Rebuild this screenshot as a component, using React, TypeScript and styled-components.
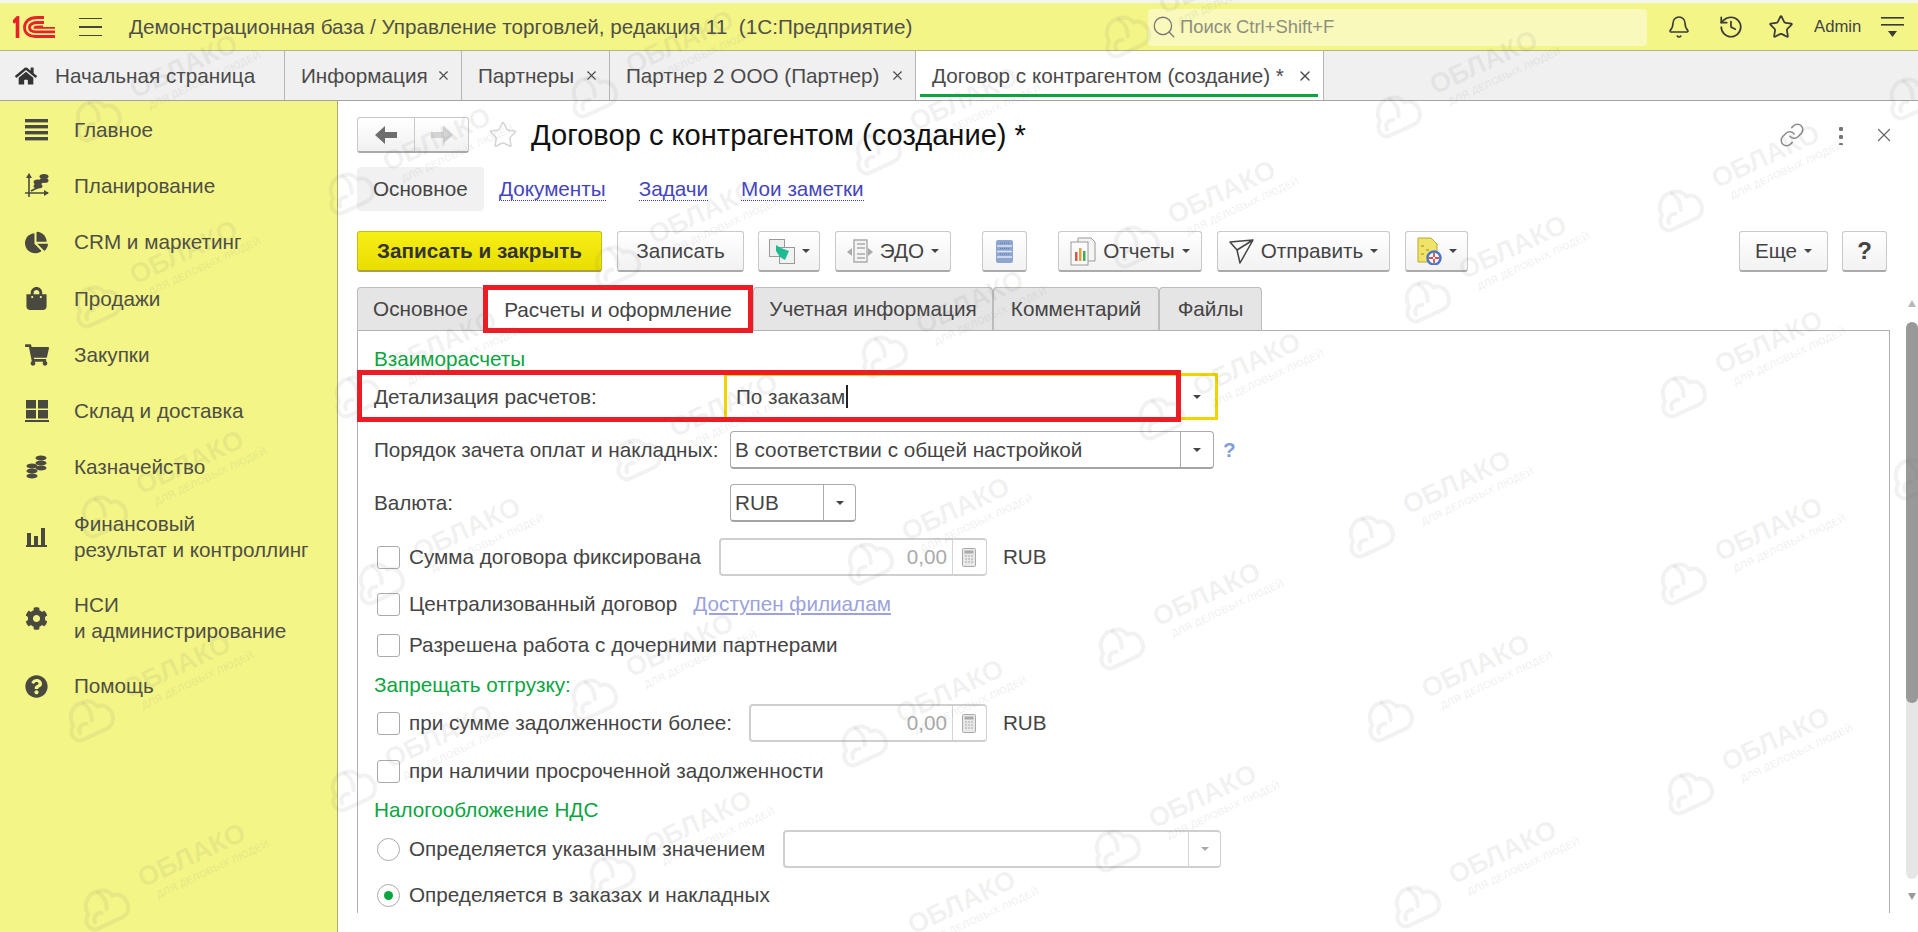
import React from "react";
import styled, { createGlobalStyle } from "styled-components";
import { Bell, History, Star, Search, Link as LinkIcon, X } from "lucide-react";
import { FaHome, FaCog, FaShoppingCart, FaQuestionCircle, FaShoppingBag, FaChartPie } from "react-icons/fa";

const GlobalStyle = createGlobalStyle`
  html, body { margin: 0; padding: 0; background: #fff; overflow: hidden; }
  * { box-sizing: border-box; }
  body { font-family: "Liberation Sans", Arial, sans-serif; color: #444; }
`;

const Page = styled.div`
  position: relative;
  width: 1918px;
  height: 932px;
  overflow: hidden;
  background: #fff;
  display: flex;
  flex-direction: column;
`;

const Header = styled.header`
  height: 51px;
  padding-top: 4px;
  background: linear-gradient(#f4f4f0 0 3px, #f3f587 3px);
  border-bottom: 1px solid #b5b580;
  display: flex;
  align-items: center;
`;

const Logo = styled.svg`
  width: 42px;
  height: 22px;
  margin-left: 13px;
`;

const Burger = styled.div`
  width: 23px;
  height: 18px;
  margin-left: 24px;
  border-top: 1.5px solid #444;
  border-bottom: 1.5px solid #444;
  position: relative;
  &::after {
    content: "";
    position: absolute;
    left: 0;
    right: 0;
    top: 7px;
    height: 1.5px;
    background: #444;
  }
`;

const HeaderTitle = styled.div`
  margin-left: 27px;
  width: 1019px;
  font-size: 20.7px;
  color: #505048;
  white-space: pre;
`;

const SearchBox = styled.div`
  width: 499px;
  height: 37px;
  background: #f8f9bb;
  border-radius: 4px;
  display: flex;
  align-items: center;
  padding-left: 3px;
  font-size: 18.4px;
  color: #8f8f80;
  gap: 3px;
`;

const HeaderIcon = styled.div<{ $ml: number }>`
  margin-left: ${(p) => p.$ml}px;
  display: flex;
  color: #3a3a3a;
`;

const AdminName = styled.div`
  margin-left: 20px;
  font-size: 16.7px;
  color: #444;
`;

const TabBar = styled.nav`
  height: 50px;
  background: #f0f0f0;
  border-bottom: 1px solid #a3a3a3;
  display: flex;
`;

const PageTab = styled.div<{ $w: number; $active?: boolean }>`
  position: relative;
  width: ${(p) => p.$w}px;
  height: 49px;
  border-right: 1px solid #b5b5b5;
  background: ${(p) => (p.$active ? "#fff" : "transparent")};
  display: flex;
  align-items: center;
  justify-content: space-between;
  padding: 0 10px 0 16px;
  font-size: 20.7px;
  color: #4a4a4a;
  white-space: nowrap;
  &::after {
    content: "";
    display: ${(p) => (p.$active ? "block" : "none")};
    position: absolute;
    left: 4px;
    right: 5px;
    top: 43px;
    height: 3px;
    background: #0aa53f;
  }
`;

const HomeTab = styled(PageTab)`
  justify-content: flex-start;
  padding-left: 15px;
  gap: 18px;
`;

const Main = styled.div`
  flex: 1;
  display: flex;
  min-height: 0;
`;

const Sidebar = styled.aside`
  width: 338px;
  flex: none;
  padding-top: 1px;
  background: #f3f587;
  border-right: 1px solid #a9a975;
`;

const SideItem = styled.div<{ $h?: number }>`
  height: ${(p) => p.$h ?? 56}px;
  display: flex;
  align-items: center;
  padding-left: 24px;
  font-size: 20.7px;
  line-height: 26px;
  color: #4f4f45;
`;

const SideIcon = styled.div`
  width: 25px;
  height: 25px;
  margin-right: 25px;
  display: flex;
  align-items: center;
  justify-content: center;
  color: #49493f;
`;

const Content = styled.main`
  flex: 1;
  min-width: 0;
  padding: 16px 0 0 19px;
  display: flex;
  flex-direction: column;
`;

const TitleRow = styled.div`
  height: 36px;
  display: flex;
  align-items: center;
`;

const NavBtnGroup = styled.div`
  width: 112px;
  height: 36px;
  display: flex;
  border: 1px solid #c9c9c9;
  border-bottom: 2px solid #aaa;
  border-radius: 3px;
  background: linear-gradient(#fff, #f1f1f1);
`;

const NavBtn = styled.div<{ $first?: boolean }>`
  flex: ${(p) => (p.$first ? "0 0 57px" : "1")};
  border-right: ${(p) => (p.$first ? "1px solid #c9c9c9" : "none")};
  display: flex;
  align-items: center;
  justify-content: center;
`;

const FavStar = styled.div`
  margin-left: 19px;
  display: flex;
  color: #d6d6d6;
`;

const FormTitle = styled.h1`
  margin: 0 0 0 13px;
  font-size: 29.1px;
  font-weight: 400;
  color: #111;
  white-space: nowrap;
`;

const TitleActions = styled.div`
  margin-left: auto;
  margin-right: 23px;
  display: flex;
  align-items: center;
  color: #8a8a8a;
`;

const Dots = styled.div`
  margin: 0 30px 0 34px;
  width: 4px;
  height: 20px;
  background: radial-gradient(circle, #777 2px, transparent 2.4px) 0 0 / 4px 8px repeat-y;
`;

const FormNav = styled.div`
  margin-top: 14px;
  height: 44px;
  display: flex;
  align-items: center;
  font-size: 20.7px;
`;

const NavCurrent = styled.div`
  width: 127px;
  height: 44px;
  border-radius: 4px;
  background: #f1f1f1;
  display: flex;
  align-items: center;
  padding-left: 16px;
  color: #444;
`;

const NavLink = styled.a<{ $ml: number }>`
  margin-left: ${(p) => p.$ml}px;
  color: #4545bd;
  border-bottom: 1px dotted #3a3ab0;
  line-height: 22px;
`;

const Toolbar = styled.div`
  margin-top: 20px;
  height: 41px;
  padding-right: 31px;
  display: flex;
`;

const Btn = styled.div<{ $w: number; $ml?: number; $primary?: boolean; $auto?: boolean }>`
  width: ${(p) => p.$w}px;
  height: 41px;
  margin-left: ${(p) => (p.$auto ? "auto" : `${p.$ml ?? 0}px`)};
  border: 1px solid ${(p) => (p.$primary ? "#c8bd10" : "#c9c9c9")};
  border-bottom: 2px solid ${(p) => (p.$primary ? "#a8a14a" : "#ababab")};
  border-radius: 3px;
  background: ${(p) => (p.$primary ? "linear-gradient(#f6ef16, #e9de00)" : "linear-gradient(#fff, #f2f2f2)")};
  display: flex;
  align-items: center;
  justify-content: center;
  gap: 7px;
  font-size: 20.7px;
  font-weight: ${(p) => (p.$primary ? 700 : 400)};
  color: ${(p) => (p.$primary ? "#333" : "#444")};
  white-space: nowrap;
`;

const Caret = styled.span<{ $light?: boolean }>`
  width: 0;
  height: 0;
  border-left: 4px solid transparent;
  border-right: 4px solid transparent;
  border-top: 4px solid ${(p) => (p.$light ? "#aaa" : "#444")};
`;

const Help = styled.span`
  font-size: 24px;
  font-weight: 700;
  color: #444;
`;

const Lower = styled.div`
  margin-top: 15px;
  display: flex;
`;

const FormArea = styled.div`
  width: 1533px;
  flex: none;
`;

const Tabs = styled.div`
  height: 44px;
  display: flex;
  position: relative;
  z-index: 1;
  margin-bottom: -1px;
`;

const FormTab = styled.div<{ $w: number; $active?: boolean }>`
  position: relative;
  width: ${(p) => p.$w}px;
  height: 44px;
  background: ${(p) => (p.$active ? "#fff" : "#e5e5e5")};
  border: 1px solid #bcbcbc;
  border-left-width: ${(p) => (p.$active ? 0 : 1)}px;
  border-bottom: ${(p) => (p.$active ? "none" : "1px solid #b0b0b0")};
  border-radius: 4px 4px 0 0;
  display: flex;
  align-items: center;
  justify-content: center;
  font-size: 20.7px;
  color: #444;
  white-space: nowrap;
`;

const RedFrame = styled.div`
  position: absolute;
  border: 5px solid #ed1c24;
  pointer-events: none;
  z-index: 3;
`;

const TabFrame = styled(RedFrame)`
  left: -1px;
  right: -1px;
  top: -3px;
  height: 48px;
`;

const RowFrame = styled(RedFrame)`
  left: -17px;
  top: -3px;
  width: 824px;
  height: 52px;
`;

const Panel = styled.section`
  height: 583px;
  padding: 15px 0 0 16px;
  border: 1px solid #b0b0b0;
  border-bottom: none;
`;

const Heading = styled.div<{ $mt?: number }>`
  height: 26px;
  margin-top: ${(p) => p.$mt ?? 0}px;
  display: flex;
  align-items: center;
  font-size: 20.7px;
  color: #0aa53f;
`;

const Row = styled.div<{ $h?: number; $mt?: number }>`
  position: relative;
  height: ${(p) => p.$h ?? 38}px;
  margin-top: ${(p) => p.$mt ?? 0}px;
  display: flex;
  align-items: center;
  font-size: 20.7px;
  color: #444;
  white-space: nowrap;
`;

const Label = styled.div<{ $w: number }>`
  width: ${(p) => p.$w}px;
  flex: none;
`;

const Check = styled.div`
  width: 23px;
  height: 23px;
  margin: 0 9px 0 3px;
  flex: none;
  background: #fff;
  border: 1px solid #aaa;
  border-radius: 3px;
`;

const Radio = styled(Check)<{ $on?: boolean }>`
  border-radius: 50%;
  display: flex;
  align-items: center;
  justify-content: center;
  &::after {
    content: "";
    display: ${(p) => (p.$on ? "block" : "none")};
    width: 9px;
    height: 9px;
    border-radius: 50%;
    background: #0aa53f;
  }
`;

const Field = styled.div<{ $w: number; $ml?: number; $off?: boolean }>`
  width: ${(p) => p.$w}px;
  height: 38px;
  margin-left: ${(p) => p.$ml ?? 0}px;
  flex: none;
  display: flex;
  background: #fff;
  border: 1px solid ${(p) => (p.$off ? "#cfcfcf" : "#ababab")};
  border-bottom: 2px solid ${(p) => (p.$off ? "#cfcfcf" : "#a3a3a3")};
  border-top-width: ${(p) => (p.$off ? 2 : 1)}px;
  border-left-width: ${(p) => (p.$off ? 2 : 1)}px;
  border-radius: 4px;
`;

const FieldValue = styled.div<{ $right?: boolean; $muted?: boolean }>`
  flex: 1;
  display: flex;
  align-items: center;
  justify-content: ${(p) => (p.$right ? "flex-end" : "flex-start")};
  padding: 0 ${(p) => (p.$right ? 5 : 4)}px;
  color: ${(p) => (p.$muted ? "#aaa" : "#444")};
`;

const FieldSide = styled.div<{ $w: number; $off?: boolean }>`
  width: ${(p) => p.$w}px;
  border-left: 1px solid ${(p) => (p.$off ? "#d5d5d5" : "#ababab")};
  display: flex;
  align-items: center;
  justify-content: center;
`;

const FocusField = styled.div`
  width: 494px;
  height: 47px;
  flex: none;
  margin-left: -1px;
  display: flex;
  align-items: center;
  border: 3px solid #f0d500;
  padding-left: 9px;
`;

const TextCursor = styled.span`
  width: 2px;
  height: 23px;
  background: #222;
  margin-left: 1px;
`;

const FocusArrow = styled.div`
  margin-left: auto;
  width: 37px;
  display: flex;
  justify-content: center;
`;

const HintMark = styled.span`
  margin-left: 9px;
  font-weight: 700;
  color: #7f9fd6;
`;

const Currency = styled.span`
  margin-left: 16px;
`;

const FilialLink = styled.span`
  margin-left: 16px;
  color: #9ba2dc;
  text-decoration: underline;
`;

const Scroll = styled.div`
  width: 12px;
  margin-left: 16px;
  padding-top: 13px;
  display: flex;
  flex-direction: column;
  align-items: center;
`;

const ScrollUp = styled.span`
  width: 0;
  height: 0;
  border-left: 4px solid transparent;
  border-right: 4px solid transparent;
  border-bottom: 7px solid #b9b9b9;
`;

const ScrollDown = styled.span`
  margin-top: 14px;
  width: 0;
  height: 0;
  border-left: 4px solid transparent;
  border-right: 4px solid transparent;
  border-top: 7px solid #999;
`;

const ScrollTrack = styled.div`
  margin-top: 15px;
  width: 12px;
  height: 557px;
  border-radius: 6px;
  background: #e6e6e6;
`;

const ScrollThumb = styled.div`
  height: 381px;
  border-radius: 6px;
  background: #999;
`;

const WatermarkLayer = styled.div`
  position: absolute;
  inset: 0;
  overflow: hidden;
  pointer-events: none;
  z-index: 5;
`;

const Watermark = styled.div`
  position: absolute;
  display: flex;
  gap: 18px;
  transform: rotate(-25deg);
  transform-origin: 126px 13px;
  color: rgba(110, 110, 110, 0.09);
`;

const WmText = styled.div`
  display: flex;
  flex-direction: column;
  align-items: flex-start;
`;

const WmName = styled.div`
  font-size: 27px;
  line-height: 27px;
  font-weight: 700;
  white-space: nowrap;
`;

const WmSlogan = styled.div`
  margin: 1px 0 0 9px;
  font-size: 10.5px;
  line-height: 12px;
  font-weight: 700;
  white-space: nowrap;
`;

const Cloud = () => (
  <svg width="52" height="44" viewBox="0 0 52 44" fill="none" stroke="currentColor" strokeWidth="4" strokeLinecap="round">
    <path d="M12 40 C3 40 1 28 9 23 C8 11 18 4 27 6 C35 7 38 12 39 16 C47 16 50 24 49 30 C48 37 43 40 38 40 Z" />
    <path d="M12 33 C12 27 17 25 22 27 M27 7 C31 13 31 20 28 26" />
  </svg>
);

// text centre of each stamp, measured on the screenshot
const stamps = [
  [182, 67], [435, 140], [182, 253], [441, 343], [188, 463], [465, 530], [175, 667], [190, 856], [437, 737],
  [678, 43], [701, 213], [722, 406], [678, 646], [696, 823], [962, 100], [968, 303], [954, 510], [948, 692],
  [960, 903], [1211, -17], [1220, 193], [1245, 365], [1205, 595], [1201, 797], [1482, 63], [1511, 248],
  [1455, 483], [1474, 667], [1501, 853], [1764, 157], [1767, 343], [1767, 530], [1774, 740], [1996, 45],
  [2000, 425],
];

const Logo1C = () => (
  <Logo viewBox="0 0 42 22" fill="none" stroke="#e8212a" strokeWidth="2.8">
    <path d="M0 6.5 L4.5 2 V22" strokeWidth="3.6" />
    <path d="M31 1.5 H24 C16 1.5 11.5 6 11.5 11.5 C11.5 17 16 20.5 22 20.5 H42" />
    <path d="M31 6.5 H25 C20 6.5 16.5 8 16.5 11.5 C16.5 14.5 19 15.8 23 15.8 H42" />
    <path d="M30 10.5 H25 C23 10.5 21.5 10.8 21.5 11.8 H42" strokeWidth="1.8" />
  </Logo>
);

const ArrowBtn = ({ left, color }: { left?: boolean; color: string }) => (
  <svg width="22" height="18" viewBox="0 0 22 18" fill={color} style={left ? undefined : { transform: "scaleX(-1)" }}>
    <path d="M0 9 L10 0 V6 H22 V12 H10 V18 Z" />
  </svg>
);

const MenuGlyph = () => (
  <svg width="23" height="21" viewBox="0 0 23 21" fill="#3a3a3a">
    <rect width="23" height="1.6" />
    <rect y="7" width="23" height="1.6" />
    <path d="M7 14 H16 L11.5 20 Z" />
  </svg>
);

const MainMenuIcon = () => (
  <svg width="23" height="22" viewBox="0 0 23 22" fill="currentColor">
    <rect y="0" width="23" height="3.4" />
    <rect y="6" width="23" height="3.4" />
    <rect y="12" width="23" height="3.4" />
    <rect y="18" width="23" height="3.4" />
  </svg>
);

const PlanIcon = () => (
  <svg width="25" height="26" viewBox="0 0 25 26" fill="none" stroke="currentColor">
    <path d="M5 1 V24 M1 20 H24" strokeWidth="1.6" />
    <path d="M2 5 L5 0 L8 5 Z M20 17 L25 20 L20 23 Z" fill="currentColor" stroke="none" />
    <path d="M7 18 L15 14" strokeWidth="1.6" />
    <ellipse cx="20" cy="3.5" rx="4.5" ry="2.5" fill="currentColor" stroke="none" />
    <ellipse cx="20" cy="7.5" rx="4.5" ry="2.5" fill="currentColor" stroke="none" />
    <ellipse cx="14" cy="9" rx="4.5" ry="2.5" fill="currentColor" stroke="none" />
    <ellipse cx="14" cy="13" rx="4.5" ry="2.5" fill="currentColor" stroke="none" />
  </svg>
);

const StockIcon = () => (
  <svg width="24" height="22" viewBox="0 0 24 22" fill="currentColor">
    <rect x="1" width="10" height="8.5" />
    <rect x="13" width="10" height="8.5" />
    <rect x="1" y="10" width="10" height="8.5" />
    <rect x="13" y="10" width="10" height="8.5" />
    <rect y="20" width="24" height="2" />
  </svg>
);

const CoinsIcon = () => (
  <svg width="21" height="25" viewBox="0 0 21 25" fill="currentColor">
    <ellipse cx="15" cy="3" rx="5.5" ry="2.6" />
    <ellipse cx="15" cy="8" rx="5.5" ry="2.6" />
    <ellipse cx="15" cy="13" rx="5.5" ry="2.6" />
    <ellipse cx="6" cy="11" rx="5.5" ry="2.6" />
    <ellipse cx="6" cy="16" rx="5.5" ry="2.6" />
    <ellipse cx="6" cy="21" rx="5.5" ry="2.6" />
  </svg>
);

const BarsIcon = () => (
  <svg width="21" height="20" viewBox="0 0 21 20" fill="currentColor">
    <rect x="1" y="6" width="4" height="12" />
    <rect x="8" y="9" width="4" height="9" />
    <rect x="15" y="1" width="4" height="17" />
    <rect y="18" width="21" height="2" />
  </svg>
);

const CalcIcon = () => (
  <svg width="14" height="19" viewBox="0 0 14 19" fill="none" stroke="#aaa">
    <rect x="0.5" y="0.5" width="13" height="18" rx="1" fill="#e8e8e8" />
    <rect x="2.5" y="2.5" width="9" height="3" fill="#aaa" stroke="none" />
    <path d="M3 8 H11 M3 11 H11 M3 14 H11" strokeDasharray="2 1" />
  </svg>
);

const MoveDocIcon = () => (
  <svg width="26" height="25" viewBox="0 0 26 25">
    <rect x="0.5" y="0.5" width="15" height="17" fill="#eee" stroke="#999" />
    <rect x="10.5" y="8.5" width="15" height="16" fill="#f2f2f2" stroke="#999" />
    <path d="M7 6 L12 9 L20 12 L16 21 L11 18 L7 12 Z" fill="#1dbb8f" />
  </svg>
);

const EdoIcon = () => (
  <svg width="26" height="24" viewBox="0 0 26 24" fill="none" stroke="#aaa" strokeWidth="1.4">
    <path d="M7 1 H20 V23 H7 Z" fill="#f4f4f4" />
    <path d="M10 5 H18 M10 9 H18 M10 15 H18 M10 19 H18" />
    <path d="M0 13 L5 9 V17 Z M26 13 L21 9 V17 Z" fill="#aaa" stroke="none" />
  </svg>
);

const StackIcon = () => (
  <svg width="17" height="23" viewBox="0 0 17 23">
    <rect width="17" height="23" rx="2" fill="#8ea6cf" />
    <path d="M1 6 H16 M1 11.5 H16 M1 17 H16" stroke="#dfe6f2" strokeWidth="1.4" />
    <path d="M4 3 H13 M4 8.5 H13 M4 14 H13" stroke="#5f7cae" strokeDasharray="1 1" />
  </svg>
);

const ReportsIcon = () => (
  <svg width="26" height="29" viewBox="0 0 26 29">
    <path d="M8 1 H21 L25 5 V24 H8 Z" fill="#f5f5f5" stroke="#999" />
    <rect x="1" y="5" width="17" height="23" fill="#fbfbfb" stroke="#999" />
    <rect x="5" y="15" width="2.5" height="9" fill="#d9534f" />
    <rect x="9" y="11" width="2.5" height="13" fill="#e2a23b" />
    <rect x="13" y="14" width="2.5" height="10" fill="#3fae5a" />
  </svg>
);

const SendIcon = () => (
  <svg width="25" height="25" viewBox="0 0 25 25" fill="none" stroke="#444" strokeWidth="1.5" strokeLinejoin="round">
    <path d="M1 3 L24 1 L11 24 L8 11 Z M8 11 L24 1" />
  </svg>
);

const SupportDocIcon = () => (
  <svg width="25" height="28" viewBox="0 0 25 28">
    <path d="M1 1 H14 L20 7 V25 H1 Z" fill="#f0e36a" stroke="#b8aa2f" />
    <path d="M4 9 H7 M9 13 H12 M4 17 H7" stroke="#b8aa2f" strokeWidth="1.5" />
    <circle cx="17" cy="21" r="6.5" fill="#fff" stroke="#4a76c8" strokeWidth="2.5" />
    <path d="M17 16 V20 M17 22 V26 M12 21 H16 M18 21 H22" stroke="#e04a4a" strokeWidth="1.8" />
  </svg>
);

const App = () => (
  <Page>
    <GlobalStyle />
    <Header>
      <Logo1C />
      <Burger />
      <HeaderTitle>{"Демонстрационная база / Управление торговлей, редакция 11  (1С:Предприятие)"}</HeaderTitle>
      <SearchBox>
        <Search size={26} strokeWidth={1.2} color="#777" />
        Поиск Ctrl+Shift+F
      </SearchBox>
      <HeaderIcon $ml={20}>
        <Bell size={24} strokeWidth={1.6} />
      </HeaderIcon>
      <HeaderIcon $ml={27}>
        <History size={26} strokeWidth={1.6} />
      </HeaderIcon>
      <HeaderIcon $ml={24}>
        <Star size={26} strokeWidth={1.6} />
      </HeaderIcon>
      <AdminName>Admin</AdminName>
      <HeaderIcon $ml={20}>
        <MenuGlyph />
      </HeaderIcon>
    </Header>

    <TabBar>
      <HomeTab $w={285}>
        <FaHome size={22} color="#333" />
        Начальная страница
      </HomeTab>
      <PageTab $w={177}>
        Информация
        <X size={15} strokeWidth={1.8} />
      </PageTab>
      <PageTab $w={148}>
        Партнеры
        <X size={15} strokeWidth={1.8} />
      </PageTab>
      <PageTab $w={306}>
        Партнер 2 ООО (Партнер)
        <X size={15} strokeWidth={1.8} />
      </PageTab>
      <PageTab $w={408} $active>
        Договор с контрагентом (создание) *
        <X size={16} strokeWidth={2} />
      </PageTab>
    </TabBar>

    <Main>
      <Sidebar>
        <SideItem>
          <SideIcon><MainMenuIcon /></SideIcon>Главное
        </SideItem>
        <SideItem>
          <SideIcon><PlanIcon /></SideIcon>Планирование
        </SideItem>
        <SideItem>
          <SideIcon><FaChartPie size={23} /></SideIcon>CRM и маркетинг
        </SideItem>
        <SideItem $h={57}>
          <SideIcon><FaShoppingBag size={23} /></SideIcon>Продажи
        </SideItem>
        <SideItem>
          <SideIcon><FaShoppingCart size={24} /></SideIcon>Закупки
        </SideItem>
        <SideItem>
          <SideIcon><StockIcon /></SideIcon>Склад и доставка
        </SideItem>
        <SideItem>
          <SideIcon><CoinsIcon /></SideIcon>Казначейство
        </SideItem>
        <SideItem $h={84}>
          <SideIcon><BarsIcon /></SideIcon>
          <div>Финансовый<br />результат и контроллинг</div>
        </SideItem>
        <SideItem $h={78}>
          <SideIcon><FaCog size={23} /></SideIcon>
          <div>НСИ<br />и администрирование</div>
        </SideItem>
        <SideItem $h={58}>
          <SideIcon><FaQuestionCircle size={23} /></SideIcon>Помощь
        </SideItem>
      </Sidebar>

      <Content>
        <TitleRow>
          <NavBtnGroup>
            <NavBtn $first><ArrowBtn left color="#6e6e6e" /></NavBtn>
            <NavBtn><ArrowBtn color="#d4d4d4" /></NavBtn>
          </NavBtnGroup>
          <FavStar><Star size={30} strokeWidth={1.2} /></FavStar>
          <FormTitle>Договор с контрагентом (создание) *</FormTitle>
          <TitleActions>
            <LinkIcon size={26} strokeWidth={1.4} />
            <Dots />
            <X size={22} strokeWidth={1.3} color="#666" />
          </TitleActions>
        </TitleRow>

        <FormNav>
          <NavCurrent>Основное</NavCurrent>
          <NavLink $ml={15}>Документы</NavLink>
          <NavLink $ml={33}>Задачи</NavLink>
          <NavLink $ml={33}>Мои заметки</NavLink>
        </FormNav>

        <Toolbar>
          <Btn $w={245} $primary>Записать и закрыть</Btn>
          <Btn $w={127} $ml={15}>Записать</Btn>
          <Btn $w={62} $ml={14}><MoveDocIcon /><Caret /></Btn>
          <Btn $w={116} $ml={15}><EdoIcon />ЭДО<Caret /></Btn>
          <Btn $w={45} $ml={31}><StackIcon /></Btn>
          <Btn $w={144} $ml={31}><ReportsIcon />Отчеты<Caret /></Btn>
          <Btn $w={173} $ml={15}><SendIcon />Отправить<Caret /></Btn>
          <Btn $w={63} $ml={15}><SupportDocIcon /><Caret /></Btn>
          <Btn $w={89} $auto>Еще<Caret /></Btn>
          <Btn $w={45} $ml={14}><Help>?</Help></Btn>
        </Toolbar>

        <Lower>
          <FormArea>
            <Tabs>
              <FormTab $w={127}>Основное</FormTab>
              <FormTab $w={269} $active>
                Расчеты и оформление
                <TabFrame />
              </FormTab>
              <FormTab $w={240}>Учетная информация</FormTab>
              <FormTab $w={166}>Комментарий</FormTab>
              <FormTab $w={103}>Файлы</FormTab>
            </Tabs>
            <Panel>
              <Heading>Взаиморасчеты</Heading>
              <Row $h={47} $mt={1}>
                <RowFrame />
                <Label $w={351}>Детализация расчетов:</Label>
                <FocusField>
                  По заказам
                  <TextCursor />
                  <FocusArrow><Caret /></FocusArrow>
                </FocusField>
              </Row>
              <Row $mt={11}>
                <Label $w={356}>Порядок зачета оплат и накладных:</Label>
                <Field $w={484}>
                  <FieldValue>В соответствии с общей настройкой</FieldValue>
                  <FieldSide $w={33}><Caret /></FieldSide>
                </Field>
                <HintMark>?</HintMark>
              </Row>
              <Row $mt={15}>
                <Label $w={356}>Валюта:</Label>
                <Field $w={126}>
                  <FieldValue>RUB</FieldValue>
                  <FieldSide $w={32}><Caret /></FieldSide>
                </Field>
              </Row>
              <Row $mt={16}>
                <Check />
                Сумма договора фиксирована
                <Field $w={268} $ml={18} $off>
                  <FieldValue $right $muted>0,00</FieldValue>
                  <FieldSide $w={34} $off><CalcIcon /></FieldSide>
                </Field>
                <Currency>RUB</Currency>
              </Row>
              <Row $h={30} $mt={13}>
                <Check />
                Централизованный договор
                <FilialLink>Доступен филиалам</FilialLink>
              </Row>
              <Row $h={30} $mt={11}>
                <Check />
                Разрешена работа с дочерними партнерами
              </Row>
              <Heading $mt={12}>Запрещать отгрузку:</Heading>
              <Row $mt={6}>
                <Check />
                при сумме задолженности более:
                <Field $w={238} $ml={17} $off>
                  <FieldValue $right $muted>0,00</FieldValue>
                  <FieldSide $w={34} $off><CalcIcon /></FieldSide>
                </Field>
                <Currency>RUB</Currency>
              </Row>
              <Row $h={30} $mt={14}>
                <Check />
                при наличии просроченной задолженности
              </Row>
              <Heading $mt={11}>Налогообложение НДС</Heading>
              <Row $mt={7}>
                <Radio />
                Определяется указанным значением
                <Field $w={438} $ml={18} $off>
                  <FieldValue />
                  <FieldSide $w={32} $off><Caret $light /></FieldSide>
                </Field>
              </Row>
              <Row $h={30} $mt={12}>
                <Radio $on />
                Определяется в заказах и накладных
              </Row>
            </Panel>
          </FormArea>
          <Scroll>
            <ScrollUp />
            <ScrollTrack>
              <ScrollThumb />
            </ScrollTrack>
            <ScrollDown />
          </Scroll>
        </Lower>
      </Content>
    </Main>

    <WatermarkLayer>
      {stamps.map(([x, y]) => (
        <Watermark key={`${x}-${y}`} style={{ left: x - 126, top: y - 13 }}>
          <Cloud />
          <WmText>
            <WmName>ОБЛАКО</WmName>
            <WmSlogan>ДЛЯ ДЕЛОВЫХ ЛЮДЕЙ</WmSlogan>
          </WmText>
        </Watermark>
      ))}
    </WatermarkLayer>
  </Page>
);

export default App;
